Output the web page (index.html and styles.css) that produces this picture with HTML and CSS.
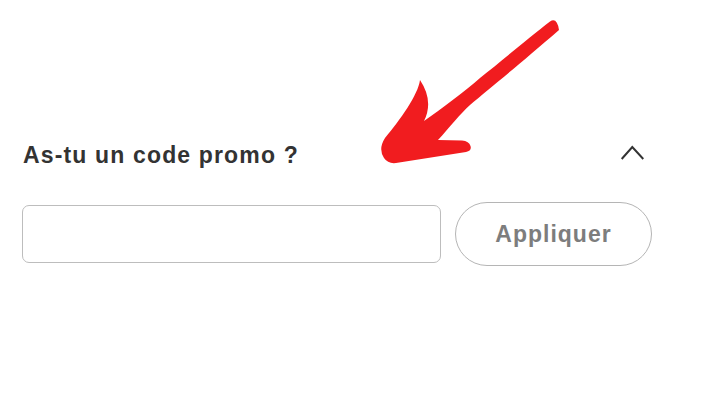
FILE: index.html
```html
<!DOCTYPE html>
<html lang="fr">
<head>
<meta charset="UTF-8">
<meta name="viewport" content="width=device-width, initial-scale=1.0">
<title>Code promo</title>
<link rel="stylesheet" href="styles.css">
</head>
<body>

<!-- bloc code promo -->
<div class="promo">
  <div class="promo-head">
    <span class="promo-title">As-tu un code promo ?</span>
    <svg class="chevron" width="24" height="16" viewBox="0 0 24 16">
      <polyline points="1.7,14 12.3,2 23.3,14" fill="none" stroke="#333" stroke-width="2"/>
    </svg>
  </div>
  <div class="promo-form">
    <input type="text" class="promo-input">
    <button class="promo-button">Appliquer</button>
  </div>
</div>

<!-- flèche d'annotation -->
<svg class="annotation" width="721" height="401" viewBox="0 0 721 401">
  <path fill="#f11c1f" d="M 550 21.5
    C 530 37 500 62 480 78
    C 465 91 440 110 424 121
    Q 434 101 420 80
    C 418 95 400 120 385 138
    Q 378 149 384 158
    Q 388 164 396 163
    L 466 152
    Q 472 151 470.5 146
    Q 469 141 462 140.5
    L 438 140
    C 450 127 460 114 470 105
    C 490 88 520 64 559 30
    Q 557 17 550 21.5 Z"/>
</svg>

</body>
</html>
```

FILE: styles.css
```css
body {
  margin: 0;
  background-color: #fff;
  font-family: 'Liberation Sans', Arial, sans-serif;
}
.promo {
  width: 630px;
  padding: 141px 0 0 22px;
}
.promo-head {
  display: flex;
  align-items: center;
  justify-content: space-between;
}
.promo-title {
  font-size: 23px;
  line-height: 28px;
  font-weight: bold;
  letter-spacing: 1.15px;
  color: #333;
  padding-left: 1px;
}
.chevron {
  margin-right: 8px;
  margin-bottom: 4px;
}
.promo-form {
  display: flex;
  align-items: center;
  gap: 14px;
  margin-top: 33px;
}
.promo-input {
  box-sizing: border-box;
  width: 419px;
  height: 58px;
  border: 1.5px solid #bdbdbd;
  border-radius: 7px;
  padding: 0 12px;
  font-size: 20px;
}
.promo-button {
  box-sizing: border-box;
  width: 197px;
  height: 64px;
  border: 1.5px solid #b5b5b5;
  border-radius: 32px;
  background-color: #fff;
  color: #7d7d7d;
  font-family: 'Liberation Sans', Arial, sans-serif;
  font-size: 23px;
  font-weight: bold;
  letter-spacing: 1px;
  padding: 0;
}
.annotation {
  position: absolute;
  top: 0;
  left: 0;
  pointer-events: none;
}
```
